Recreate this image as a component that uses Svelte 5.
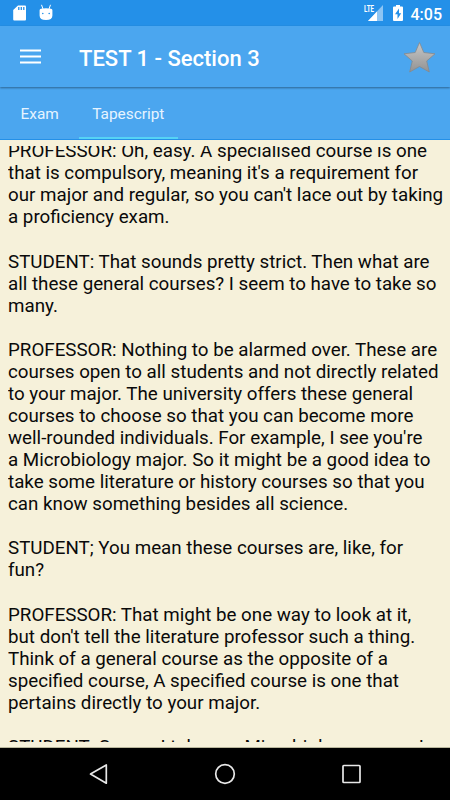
<script lang="ts">
  interface Tab {
    id: string;
    label: string;
  }

  const tabs: Tab[] = [
    { id: 'exam', label: 'Exam' },
    { id: 'tapescript', label: 'Tapescript' },
  ];

  // Each paragraph keeps its own line breaks
  const paragraphs = [
    `PROFESSOR: Oh, easy. A specialised course is one
that is compulsory, meaning it's a requirement for
our major and regular, so you can't lace out by taking
a proficiency exam.`,
    `STUDENT: That sounds pretty strict. Then what are
all these general courses? I seem to have to take so
many.`,
    `PROFESSOR: Nothing to be alarmed over. These are
courses open to all students and not directly related
to your major. The university offers these general
courses to choose so that you can become more
well-rounded individuals. For example, I see you're
a Microbiology major. So it might be a good idea to
take some literature or history courses so that you
can know something besides all science.`,
    `STUDENT; You mean these courses are, like, for
fun?`,
    `PROFESSOR: That might be one way to look at it,
but don't tell the literature professor such a thing.
Think of a general course as the opposite of a
specified course, A specified course is one that
pertains directly to your major.`,
    `STUDENT: So can I take any Microbiology course I`,
  ];

  let active = $state('tapescript');
  let starred = $state(false);
</script>

<div class="screen">
  <div class="status">
    <svg class="sd" viewBox="0 0 14 18" aria-hidden="true">
      <path d="M5 1.500h7a1 1 0 0 1 1 1v13a1 1 0 0 1-1 1H1.200a1 1 0 0 1-1-1V6z" fill="#fff" />
      <path d="M5.800 3v3M8.300 3v3M10.800 3v3" stroke="#2490e8" stroke-width="1.300" />
    </svg>
    <svg class="bot" viewBox="0 0 14 18" aria-hidden="true">
      <path d="M2.500.8 4 5M11.500.8 10 5" stroke="#fff" stroke-width="1" />
      <path d="M.6 6.200Q.6 5 2 4.800 7 3.600 12 4.800q1.400.2 1.400 1.400v5.300q0 4.500-6.400 4.500T.6 11.500z" fill="#fff" />
      <circle cx="3.800" cy="9.500" r=".8" fill="#2490e8" />
      <circle cx="10.200" cy="9.500" r=".8" fill="#2490e8" />
    </svg>
    <span class="spacer"></span>
    <div class="signal">
      <svg viewBox="0 0 20 18" aria-hidden="true">
        <path d="M19 1v16H4z" fill="#8dc5f4" />
        <path d="M13 7.500V17H4z" fill="#fff" />
      </svg>
      <span class="lte">LTE</span>
    </div>
    <svg class="battery" viewBox="0 0 10 18" aria-hidden="true">
      <path d="M3 1h4v1.500h2a1 1 0 0 1 1 1V16a1 1 0 0 1-1 1H1a1 1 0 0 1-1-1V3.500a1 1 0 0 1 1-1h2z" fill="#fff" />
      <path d="M6 4.500 2 10.300h2.500V15l3.700-5.800H6z" fill="#2490e8" />
    </svg>
    <span class="clock">4:05</span>
  </div>

  <header class="toolbar">
    <button class="icon-btn" aria-label="Menu">
      <svg width="21" height="15" viewBox="0 0 21 15">
        <path d="M0 1.400h21M0 7.500h21M0 13.600h21" stroke="#fff" stroke-width="2" />
      </svg>
    </button>
    <h1>TEST 1 - Section 3</h1>
    <button class="icon-btn" aria-label="Favourite" aria-pressed={starred} onclick={() => (starred = !starred)}>
      <svg width="34" height="34" viewBox="0 0 34 34">
        <defs>
          <linearGradient id="star-fill" x1="0" y1="0" x2="0" y2="1">
            <stop offset="0" stop-color="#c8c8c8" />
            <stop offset=".45" stop-color="#b0b0b0" />
            <stop offset="1" stop-color="#929292" />
          </linearGradient>
        </defs>
        <path
          d="M17.500 2.500 21.800 12.500 33 13.800 24.700 21 27.300 32 17.500 26.500 7.700 32 10.300 21 2 13.800 13.200 12.500z"
          fill="url(#star-fill)"
          stroke="#85898d"
          stroke-width=".8"
          stroke-linejoin="round"
        />
      </svg>
    </button>
  </header>

  <div class="tabs" role="tablist">
    {#each tabs as tab (tab.id)}
      <button
        class="tab"
        class:tab-active={active === tab.id}
        role="tab"
        aria-selected={active === tab.id}
        onclick={() => (active = tab.id)}
      >
        {tab.label}
      </button>
    {/each}
  </div>

  <main class="page">
    <div class="script">
      {#each paragraphs as text}
        <p>{text}</p>
      {/each}
    </div>
  </main>

  <nav class="navbar">
    <svg viewBox="0 0 24 24" aria-label="Back">
      <path d="M20.300 3v18.200L4.500 12.100z" />
    </svg>
    <svg viewBox="0 0 24 24" aria-label="Home">
      <circle cx="12" cy="12" r="9.300" />
    </svg>
    <svg viewBox="0 0 24 24" aria-label="Recents">
      <rect x="4" y="3.500" width="17" height="17" rx=".8" />
    </svg>
  </nav>
</div>

<style>
  :global(body) {
    margin: 0;
  }

  .screen {
    display: flex;
    flex-direction: column;
    width: 450px;
    height: 800px;
    overflow: hidden;
    background: #f6f1da;
    font-family: Roboto, 'Liberation Sans', sans-serif;
    color: #0a0a0a;
  }

  button {
    padding: 0;
    border: 0;
    background: none;
    color: inherit;
    font: inherit;
    cursor: pointer;
  }

  /* Status bar */
  .status {
    display: flex;
    align-items: center;
    flex: none;
    box-sizing: border-box;
    height: 26px;
    padding: 0 8px 0 13px;
    background: #2490e8;
    color: #fff;
  }
  .sd, .bot { width: 14px; height: 18px; }
  .bot { margin-left: 12px; }
  .spacer { flex: 1; }
  .signal {
    position: relative;
    width: 20px;
    height: 18px;
    margin-right: 9px;
  }
  .signal svg { display: block; width: 20px; height: 18px; }
  .lte {
    position: absolute;
    top: 0;
    left: 0;
    font-size: 9.500px;
    line-height: 9px;
    font-weight: 700;
    transform: scaleX(.65);
    transform-origin: left;
  }
  .battery { width: 10px; height: 18px; }
  .clock {
    margin-left: 8px;
    padding-top: 3px;
    font-size: 16px;
    line-height: 23px;
    font-weight: 500;
  }

  /* Toolbar */
  .toolbar {
    position: relative;
    display: flex;
    align-items: center;
    flex: none;
    box-sizing: border-box;
    height: 61px;
    padding: 0 14px 0 20px;
    background: #4ba6ef;
    box-shadow: 0 1px 2px rgba(0, 0, 0, .4);
    color: #fff;
  }
  .icon-btn svg { display: block; }
  h1 {
    flex: 1;
    margin: 4px 0 0 38px;
    font-size: 22px;
    font-weight: 500;
    line-height: 28px;
    white-space: nowrap;
  }

  /* Tabs */
  .tabs {
    display: flex;
    flex: none;
    box-sizing: border-box;
    height: 53px;
    background: #4ba6ef;
    border-bottom: 1px solid #2490e8;
  }
  .tab {
    box-sizing: border-box;
    padding: 4px 13.500px 0;
    border-bottom: 2px solid transparent;
    font-size: 15.400px;
    color: #e6f4ff;
  }
  .tab:first-child { padding-left: 20.500px; padding-right: 20px; }
  .tab-active { border-bottom-color: #55d3f5; }

  /* Transcript */
  .page {
    display: flex;
    flex: 1;
    min-height: 0;
    padding: 6px 0 5px 8px;
    border-bottom: 1px solid #b9b79c;
  }
  .script {
    flex: 1;
    display: flex;
    flex-direction: column;
    justify-content: flex-end;
    gap: 22.070px;
    overflow: hidden;
    font-size: 18.750px;
    line-height: 22.070px;
  }
  p {
    flex: none;
    margin: 0;
    white-space: pre;
  }
  /* the last line is only just scrolled into view */
  p:last-child { margin-bottom: -16px; }

  /* System navigation */
  .navbar {
    display: flex;
    align-items: center;
    justify-content: space-between;
    flex: none;
    box-sizing: border-box;
    height: 52px;
    padding: 0 87px 0 86px;
    background: #000;
  }
  .navbar svg {
    width: 24px;
    height: 24px;
    fill: none;
    stroke: #e8e8e8;
    stroke-width: 1.700;
    stroke-linejoin: round;
  }
</style>
